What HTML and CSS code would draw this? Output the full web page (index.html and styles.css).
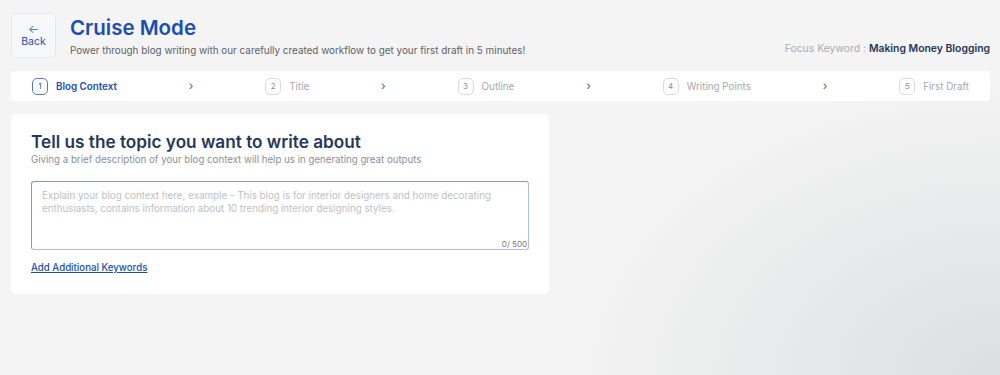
FILE: index.html
```html
<!DOCTYPE html>
<html lang="en">
  <head>
    <meta charset="UTF-8" />
    <meta name="viewport" content="width=device-width, initial-scale=1.0" />
    <title>Cruise Mode</title>
    <link rel="stylesheet" href="styles.css">
  </head>
  <body>
    <div class="page">
      <header class="page-header">
        <button class="back-btn">
          <span class="back-arrow">&larr;</span>
          <span>Back</span>
        </button>
        <div class="heading">
          <h1>Cruise Mode</h1>
          <p class="tagline">
            Power through blog writing with our carefully created workflow to get your first draft in 5 minutes!
          </p>
        </div>
        <div class="focus-keyword">
          <span class="focus-label">Focus Keyword :</span>
          <span class="focus-value">Making Money Blogging</span>
        </div>
      </header>

      <nav class="steps">
        <div class="step active"><span class="step-num">1</span>Blog Context</div>
        <span class="chevron">&rsaquo;</span>
        <div class="step"><span class="step-num">2</span>Title</div>
        <span class="chevron">&rsaquo;</span>
        <div class="step"><span class="step-num">3</span>Outline</div>
        <span class="chevron">&rsaquo;</span>
        <div class="step"><span class="step-num">4</span>Writing Points</div>
        <span class="chevron">&rsaquo;</span>
        <div class="step"><span class="step-num">5</span>First Draft</div>
      </nav>

      <section class="card">
        <h2>Tell us the topic you want to write about</h2>
        <p class="card-sub">Giving a brief description of your blog context will help us in generating great outputs</p>
        <div class="field">
          <textarea
            maxlength="500"
            placeholder="Explain your blog context here, example - This blog is for interior designers and home decorating enthusiasts, contains information about 10 trending interior designing styles."
          ></textarea>
          <span class="counter">0/ 500</span>
        </div>
        <a href="#" class="add-link">Add Additional Keywords</a>
      </section>
    </div>
  </body>
</html>
```

FILE: styles.css
```css
:root {
  --primary-color: #1a4fb0;
  --heading-color: #26375a;
  --text-color: #5d6168;
  --muted-color: #a3a7ad;
  --background-color: #f4f4f4;
  --border-radius: 6px;
}

* {
  margin: 0;
  padding: 0;
  box-sizing: border-box;
  font-family: Inter, 'Noto Sans', sans-serif;
}

body {
  min-height: 100vh;
  background-color: var(--background-color);
  background-image: radial-gradient(
    ellipse 440px 300px at 100% 100%,
    #dddee0 0%,
    #e7e8e9 45%,
    rgba(244, 244, 244, 0) 100%
  );
  background-attachment: fixed;
  color: var(--text-color);
}

.page {
  padding: 13px 10px 20px 11px;
}

.page-header {
  display: flex;
  align-items: flex-start;
}

.back-btn {
  width: 45px;
  height: 45px;
  flex-shrink: 0;
  display: flex;
  flex-direction: column;
  align-items: center;
  justify-content: center;
  background-color: #f7f8fa;
  border: 1px solid #e6e8ec;
  border-radius: 5px;
  color: var(--primary-color);
  font-size: 10.5px;
  line-height: 14px;
  cursor: pointer;
}

.back-arrow {
  font-size: 12px;
  line-height: 12px;
  color: #5a78b8;
}

.heading {
  flex: 1;
  margin-left: 14px;
}

h1 {
  color: var(--primary-color);
  font-size: 20.5px;
  font-weight: 600;
  line-height: 26px;
  margin-top: 2px;
}

.tagline {
  margin-top: 2px;
  font-size: 9.9px;
  line-height: 14px;
  color: var(--text-color);
}

.focus-keyword {
  align-self: flex-end;
  margin-bottom: 2px;
  font-size: 10.4px;
  line-height: 14px;
}

.focus-label {
  color: #a9adb3;
}

.focus-value {
  color: var(--heading-color);
  font-weight: 600;
}

.steps {
  margin-top: 13px;
  height: 30px;
  display: flex;
  align-items: center;
  justify-content: space-between;
  padding: 0 21px;
  background-color: #fff;
  border-radius: 4px;
}

.step {
  display: flex;
  align-items: center;
  font-size: 9.8px;
  color: #a5a8ad;
}

.step-num {
  width: 16px;
  height: 17px;
  display: flex;
  align-items: center;
  justify-content: center;
  margin-right: 8px;
  border: 1px solid #d8dadd;
  border-radius: 5px;
  font-size: 8px;
  color: #8d9095;
}

.step.active {
  color: var(--primary-color);
  font-weight: 600;
}

.step.active .step-num {
  border-color: #5578bd;
  color: var(--primary-color);
  font-weight: 400;
}

.chevron {
  font-size: 12px;
  line-height: 12px;
  color: #666;
}

.card {
  margin-top: 13px;
  width: 538px;
  height: 180px;
  padding: 17px 20px 0;
  background-color: #fff;
  border-radius: var(--border-radius);
}

h2 {
  color: var(--heading-color);
  font-size: 17.2px;
  font-weight: 600;
  line-height: 21px;
}

.card-sub {
  margin-top: 1px;
  font-size: 9.7px;
  line-height: 14px;
  color: #8b8f95;
}

.field {
  position: relative;
  margin-top: 14px;
}

textarea {
  display: block;
  width: 100%;
  height: 69px;
  padding: 7px 10px;
  border: 1px solid #a9bedf;
  border-left-color: #8798b4;
  border-top-color: #8798b4;
  border-radius: 3px;
  resize: none;
  outline: none;
  font-size: 9.8px;
  line-height: 13px;
  color: var(--text-color);
}

textarea::placeholder {
  color: #bdbfc3;
}

.counter {
  position: absolute;
  right: 2px;
  bottom: 1px;
  font-size: 8px;
  color: #777;
}

.add-link {
  display: inline-block;
  margin-top: 12px;
  font-size: 9.7px;
  font-weight: 500;
  color: var(--primary-color);
}
```
